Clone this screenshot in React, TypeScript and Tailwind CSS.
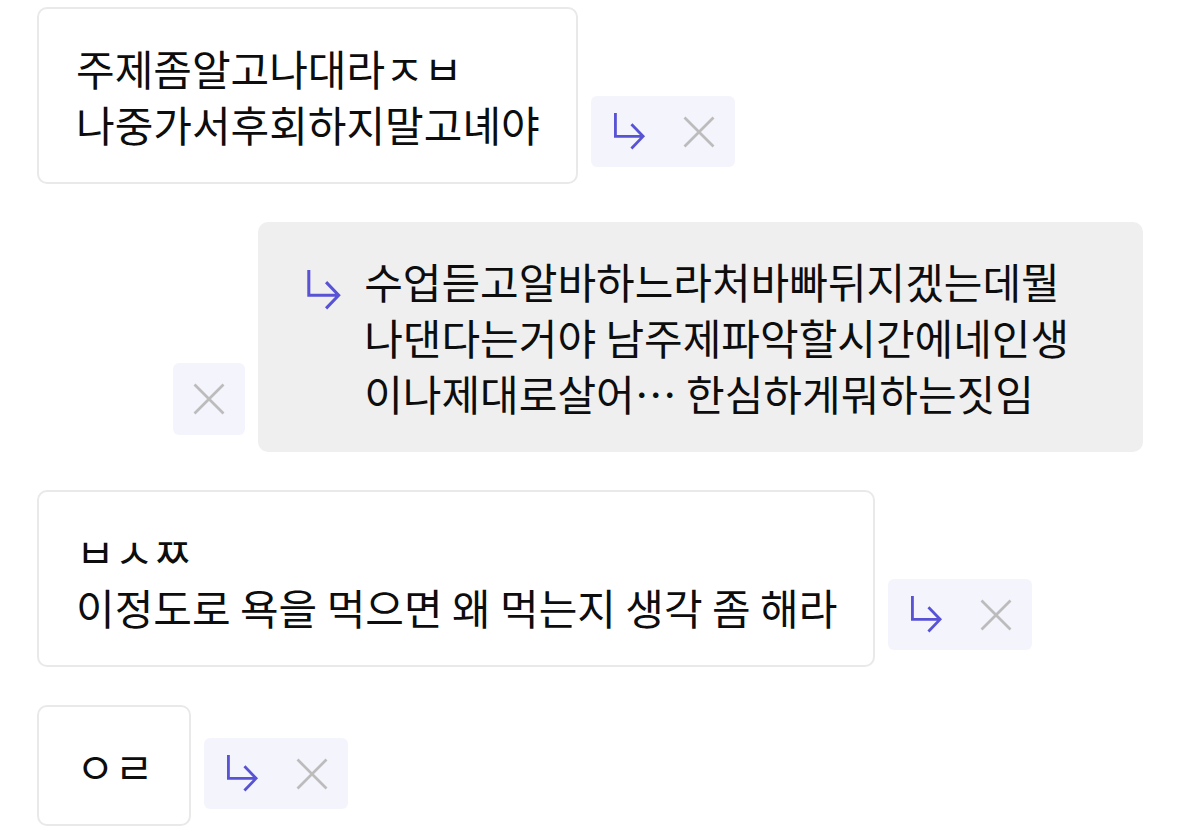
import React from "react";

const FONT = { fontFamily: '"Noto Sans CJK KR", "Noto Sans", sans-serif' };

function ReplyArrow({ className }: { className?: string }) {
  return (
    <svg viewBox="0 0 34 42" className={className} fill="none">
      <path
        d="M2.5 2 V26 H31 M19 13.5 L31 26 L19 38.5"
        stroke="#5853d4"
        strokeWidth="2.9"
        strokeLinejoin="miter"
      />
    </svg>
  );
}

function XIcon({ className }: { className?: string }) {
  return (
    <svg viewBox="0 0 32 32" className={className} fill="none">
      <path d="M1.5 1.5 L30.5 30.5 M30.5 1.5 L1.5 30.5" stroke="#bcbcbc" strokeWidth="2.7" />
    </svg>
  );
}

function Actions() {
  return (
    <div className="mb-[17px] flex shrink-0 rounded-[6px] bg-[#f4f4fc]">
      <div className="flex h-[71px] w-[72px] items-center justify-center">
        <ReplyArrow className="ml-[5px] h-[41px] w-[33px]" />
      </div>
      <div className="flex h-[71px] w-[72px] items-center justify-center">
        <XIcon className="h-[32px] w-[32px]" />
      </div>
    </div>
  );
}

function Lines({ lines }: { lines: string[] }) {
  return (
    <div className="text-[42px] leading-[56px] text-[#0d0d0d]">
      {lines.map((l, i) => (
        <div key={i} className="whitespace-nowrap">
          {l}
        </div>
      ))}
    </div>
  );
}

function Bubble({ lines }: { lines: string[] }) {
  return (
    <div className="shrink-0 rounded-[10px] border-2 border-[#e9e9e9] bg-white pt-[31px] pr-[36px] pb-[30px] pl-[37px]">
      <Lines lines={lines} />
    </div>
  );
}

export default function App() {
  return (
    <div className="min-h-[833px] w-[1179px] bg-white" style={FONT}>
      <div className="flex flex-col gap-[38px] pt-[7px] pr-[36px] pl-[37px]">
        <div className="flex items-end gap-[13px]">
          <Bubble lines={["주제좀알고나대라ㅈㅂ", "나중가서후회하지말고녜야"]} />
          <Actions />
        </div>

        <div className="flex items-end justify-end gap-[13px]">
          <div className="mb-[17px] flex h-[72px] w-[72px] items-center justify-center rounded-[6px] bg-[#f4f4fc]">
            <XIcon className="h-[32px] w-[32px]" />
          </div>
          <div className="flex w-[80%] rounded-[10px] bg-[#efefef] pt-[31px] pr-[40px] pb-[31px] pl-[48px]">
            <ReplyArrow className="mt-[15px] mr-[22px] h-[44px] w-[36px] shrink-0" />
            <Lines
              lines={[
                "수업듣고알바하느라처바빠뒤지겠는데뭘",
                "나댄다는거야 남주제파악할시간에네인생",
                "이나제대로살어… 한심하게뭐하는짓임",
              ]}
            />
          </div>
        </div>

        <div className="flex items-end gap-[13px]">
          <Bubble lines={["ㅂㅅㅉ", "이정도로 욕을 먹으면 왜 먹는지 생각 좀 해라"]} />
          <Actions />
        </div>

        <div className="flex items-end gap-[13px]">
          <Bubble lines={["ㅇㄹ"]} />
          <Actions />
        </div>
      </div>
    </div>
  );
}
